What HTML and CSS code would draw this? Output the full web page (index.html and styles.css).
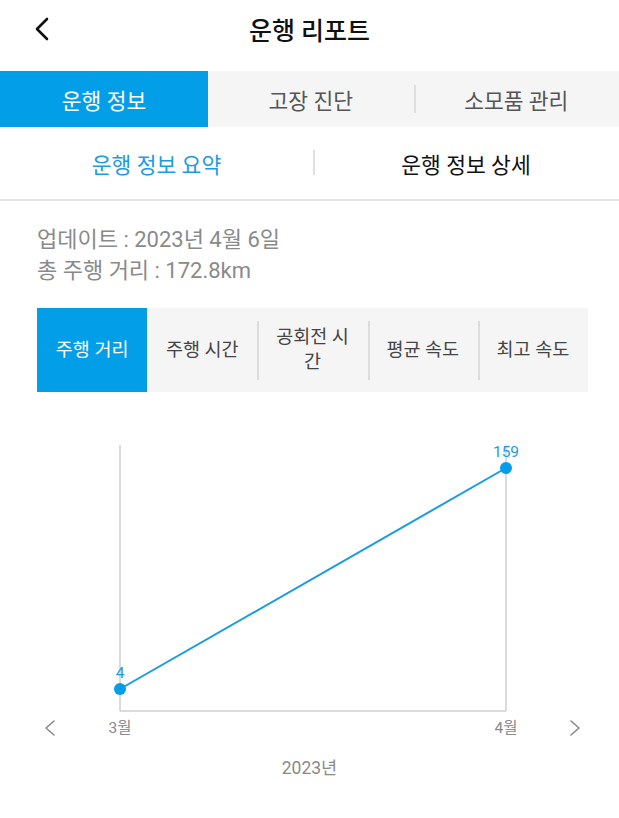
FILE: index.html
```html
<!DOCTYPE html>
<html lang="ko">
<head>
<meta charset="utf-8">
<title>운행 리포트</title>
<link rel="stylesheet" href="styles.css">
</head>
<body>
<div class="app">
  <header class="header">
    <button class="back" aria-label="뒤로">
      <svg width="16" height="24" viewBox="0 0 16 24"><path d="M13 2 L3 12 L13 22" fill="none" stroke="#111" stroke-width="2.6" stroke-linecap="round" stroke-linejoin="round"/></svg>
    </button>
    <h1 class="title">운행 리포트</h1>
  </header>

  <nav class="tabbar">
    <div class="tab active">운행 정보</div>
    <div class="tab">고장 진단</div>
    <div class="tab sep">소모품 관리</div>
  </nav>

  <nav class="subtabs">
    <div class="subtab active">운행 정보 요약</div>
    <div class="subtab sep">운행 정보 상세</div>
  </nav>

  <section class="summary">
    <p>업데이트 : 2023년 4월 6일</p>
    <p>총 주행 거리 : 172.8km</p>
  </section>

  <div class="metrics">
    <div class="metric active">주행 거리</div>
    <div class="metric">주행 시간</div>
    <div class="metric sep">공회전 시간</div>
    <div class="metric sep">평균 속도</div>
    <div class="metric sep">최고 속도</div>
  </div>

  <div class="chart">
    <svg width="619" height="315" viewBox="0 0 619 315">
      <g stroke="#cfcfcf" stroke-width="1.5" fill="none">
        <line x1="120" y1="15" x2="120" y2="281"/>
        <line x1="506" y1="15" x2="506" y2="281"/>
        <line x1="120" y1="281" x2="506" y2="281"/>
      </g>
      <line x1="120" y1="259" x2="506" y2="38" stroke="#1a9be3" stroke-width="2"/>
      <circle cx="120" cy="259" r="6" fill="#039ee8"/>
      <circle cx="506" cy="38" r="6" fill="#039ee8"/>
      <text x="120" y="248" class="val">4</text>
      <text x="506" y="27" class="val">159</text>
      <text x="120" y="303" class="xl">3월</text>
      <text x="506" y="303" class="xl">4월</text>
      <path d="M54 291 L46 298 L54 305" fill="none" stroke="#888" stroke-width="1.6" stroke-linecap="round" stroke-linejoin="round"/>
      <path d="M571 291 L579 298 L571 305" fill="none" stroke="#888" stroke-width="1.6" stroke-linecap="round" stroke-linejoin="round"/>
    </svg>
    <div class="year">2023년</div>
  </div>
</div>
</body>
</html>
```

FILE: styles.css
```css
* { box-sizing: border-box; }
html, body { margin: 0; padding: 0; background: #fff; }
body {
  font-family: Roboto, "Noto Sans CJK KR", "Noto Sans", sans-serif;
  color: #111;
}
.app { width: 619px; }

.header {
  height: 58px;
  margin-bottom: 13px;
  display: flex;
  align-items: center;
  justify-content: center;
  position: relative;
}
.back {
  position: absolute;
  left: 34px;
  top: 17px;
  border: 0;
  background: none;
  padding: 0;
  width: 16px;
  height: 24px;
}
.back svg { display: block; }
.title {
  margin: 0;
  font-size: 25px;
  font-weight: 500;
}

.tabbar {
  height: 56px;
  display: grid;
  grid-template-columns: 208px 1fr 1fr;
  background: #f5f5f5;
}
.tab {
  display: flex;
  align-items: center;
  justify-content: center;
  font-size: 21.5px;
  color: #555;
  position: relative;
}
.tab.active { background: #039ee8; color: #fff; }
.tab.sep::before {
  content: "";
  position: absolute;
  left: 0;
  top: 14px;
  bottom: 14px;
  width: 2px;
  background: #dedede;
}

.subtabs {
  height: 74px;
  display: grid;
  grid-template-columns: 313px 1fr;
  border-bottom: 2px solid #e3e3e3;
}
.subtab {
  display: flex;
  align-items: center;
  justify-content: center;
  font-size: 21.5px;
  color: #111;
  position: relative;
}
.subtab.active { color: #1a9be3; }
.subtab.sep::before {
  content: "";
  position: absolute;
  left: 0;
  top: 23px;
  bottom: 24px;
  width: 2px;
  background: #e0e0e0;
}

.summary {
  padding: 23px 37px 0;
  color: #8a8a8a;
  font-size: 22px;
}
.summary p { margin: 0; line-height: 31px; }

.metrics {
  margin: 22px 31px 0 37px;
  height: 84px;
  display: flex;
  background: #f5f5f5;
}
.metric {
  flex: 1;
  display: flex;
  align-items: center;
  justify-content: center;
  text-align: center;
  padding: 0 14px;
  font-size: 18.5px;
  line-height: 25px;
  color: #444;
  position: relative;
}
.metric.active { background: #039ee8; color: #fff; }
.metric.sep::before {
  content: "";
  position: absolute;
  left: 0;
  top: 13px;
  bottom: 12px;
  width: 2px;
  background: #dcdcdc;
}

.chart { margin-top: 38px; }
.chart svg { display: block; }
.val {
  font-family: Roboto, "Noto Sans CJK KR", sans-serif;
  font-size: 15.5px;
  fill: #1a9be3;
  text-anchor: middle;
}
.xl {
  font-family: Roboto, "Noto Sans CJK KR", sans-serif;
  font-size: 15.5px;
  fill: #8a8a8a;
  text-anchor: middle;
}
.year {
  text-align: center;
  color: #8a8a8a;
  font-size: 17.5px;
  margin-top: 9px;
}
```
